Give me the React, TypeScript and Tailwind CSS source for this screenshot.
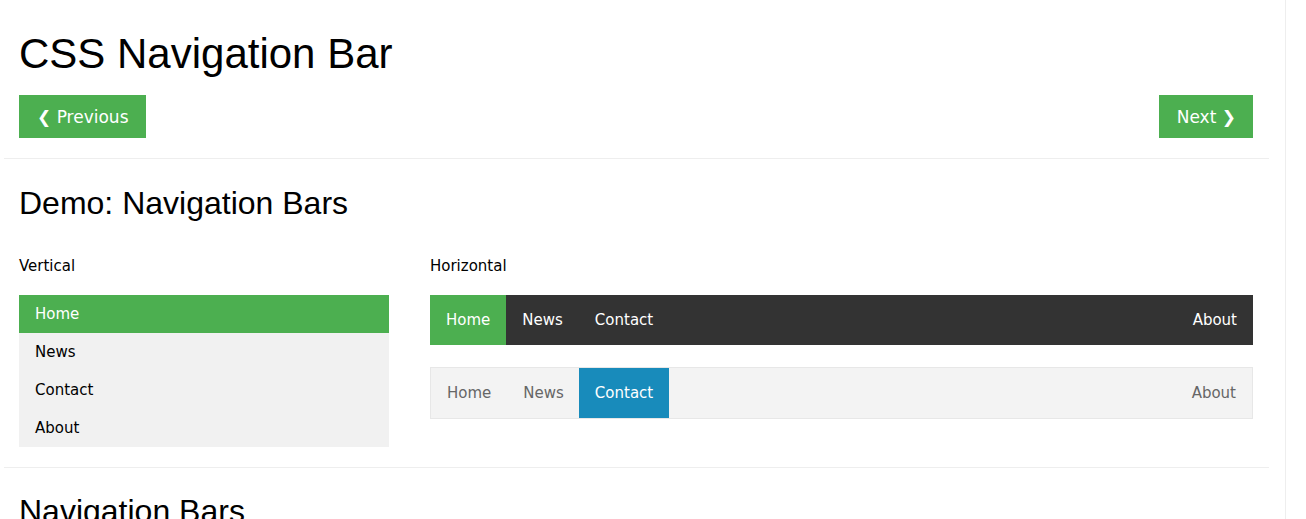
import React from 'react'

const heading = { fontFamily: '"Liberation Sans", Arial, sans-serif' }

const verticalLinks = ['Home', 'News', 'Contact', 'About']

function VerticalNav() {
  return (
    <ul className="w-[370px] bg-[#f1f1f1]">
      {verticalLinks.map((link, i) => (
        <li
          key={link}
          className={`h-[38px] px-4 pt-px leading-[37px] ${i === 0 ? 'bg-[#4caf50] text-white' : 'text-black'}`}
        >
          {link}
        </li>
      ))}
    </ul>
  )
}

function DarkNav() {
  return (
    <div className="flex h-[50px] bg-[#333] text-white">
      <span className="bg-[#4caf50] px-4 pt-px leading-[49px]">Home</span>
      <span className="px-4 pt-px leading-[49px]">News</span>
      <span className="px-4 pt-px leading-[49px]">Contact</span>
      <span className="ml-auto px-4 pt-px leading-[49px]">About</span>
    </div>
  )
}

function LightNav() {
  return (
    <div className="flex h-[52px] border border-[#e7e7e7] bg-[#f3f3f3] text-[#666]">
      <span className="px-4 pt-px leading-[49px]">Home</span>
      <span className="pl-4 pr-[15px] pt-px leading-[49px]">News</span>
      <span className="bg-[#188bbb] px-4 pt-px leading-[49px] text-white">Contact</span>
      <span className="ml-auto px-4 pt-px leading-[49px]">About</span>
    </div>
  )
}

export default function App() {
  return (
    <div
      className="h-[519px] overflow-hidden bg-white text-[15px] text-black"
      style={{ fontFamily: '"DejaVu Sans", Verdana, sans-serif' }}
    >
      <div className="h-full w-[1286px] border-r border-[#eee]">
        <div className="ml-[4px] w-[1265px]">
          <div className="pl-[15px] pr-[16px] pt-[30px] pb-[20px]">
            <h1 className="text-[42px] leading-[48px]" style={heading}>
              CSS Navigation Bar
            </h1>
            <div className="mt-[17px] flex justify-between">
              <span className="flex h-[43px] items-center bg-[#4caf50] pl-[18px] pr-[17px] pt-[2px] text-[17px] text-white">
                ❮ Previous
              </span>
              <span className="flex h-[43px] items-center bg-[#4caf50] pl-[18px] pr-[17px] pt-[2px] text-[17px] text-white">
                Next ❯
              </span>
            </div>
          </div>
          <div className="border-t border-[#eee]" />
          <div className="pl-[15px] pr-[16px] pt-[26px] pb-[20px]">
            <h2 className="text-[32px] leading-[37px]" style={heading}>
              Demo: Navigation Bars
            </h2>
            <div className="mt-[33px] flex gap-[41px]">
              <div>
                <p className="pt-px leading-[21px]">Vertical</p>
                <div className="mt-[18px]">
                  <VerticalNav />
                </div>
              </div>
              <div className="flex-1">
                <p className="pt-px leading-[21px]">Horizontal</p>
                <div className="mt-[18px]">
                  <DarkNav />
                </div>
                <div className="mt-[22px]">
                  <LightNav />
                </div>
              </div>
            </div>
          </div>
          <div className="border-t border-[#eee]" />
          <div className="pl-[15px] pr-[16px] pt-[25px]">
            <h2 className="text-[32px] leading-[37px]" style={heading}>
              Navigation Bars
            </h2>
          </div>
        </div>
      </div>
    </div>
  )
}
